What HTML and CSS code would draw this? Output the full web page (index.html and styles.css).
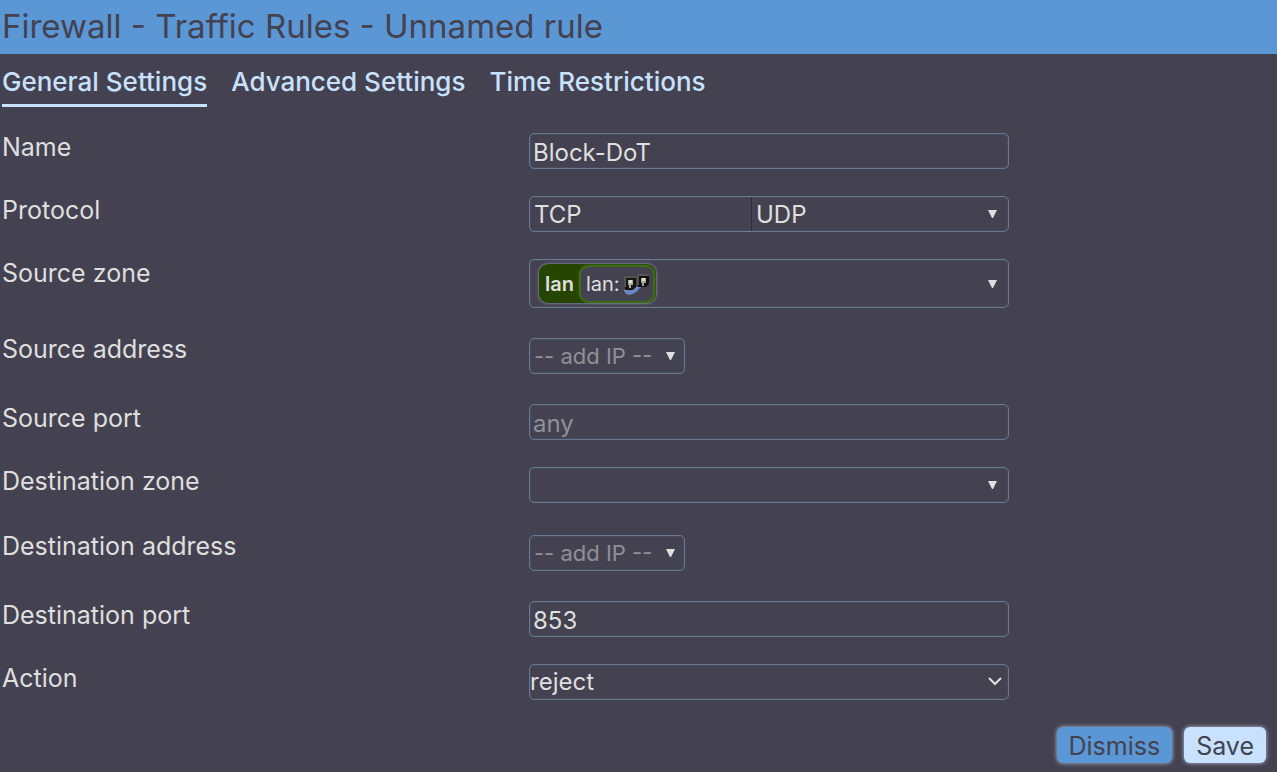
FILE: index.html
```html
<!DOCTYPE html>
<html lang="en">
<head>
<meta charset="utf-8">
<title>Firewall - Traffic Rules</title>
<link rel="stylesheet" href="styles.css">
</head>
<body>
<header class="title-bar"><h1 class="title">Firewall - Traffic Rules - Unnamed rule</h1></header>
<nav class="tabs">
  <a class="tab tab-active" href="#general">General Settings</a>
  <a class="tab" href="#advanced">Advanced Settings</a>
  <a class="tab" href="#time">Time Restrictions</a>
</nav>
<form class="form">
  <div class="row">
    <label class="label" for="name">Name</label>
    <div class="field"><input class="control" id="name" type="text" value="Block-DoT"></div>
  </div>
  <div class="row">
    <label class="label" for="protocol">Protocol</label>
    <div class="field"><button class="control dropdown" id="protocol" type="button">
      <span class="choice">TCP</span><span class="choice choice-next">UDP</span>
      <svg class="arrow" viewBox="0 0 9 8"><path d="M0 0h9L5 8H4z"/></svg>
    </button></div>
  </div>
  <div class="row">
    <label class="label" for="source-zone">Source zone</label>
    <div class="field"><button class="control dropdown zone" id="source-zone" type="button">
      <span class="zone-badge"><strong class="zone-name">lan</strong><span class="network">lan:
        <svg class="network-icon" viewBox="0 0 26 24">
          <path d="M2 17C4 24 11 21 15 16S21 12 23 12" fill="none" stroke="#6688ca" stroke-width="3"/>
          <path d="M3 17C6 21 10 19 14 15" fill="none" stroke="#8eabdd"/>
          <path d="M1 4h12v11l-3 3H2z" fill="#171715"/>
          <path d="M1 4h12v2H3v9H1z" fill="#55554f"/>
          <path d="M5 8h5v5H8v3H6v-3H5z" fill="#aaa99d"/>
          <path d="M6 8h3v3H6z" fill="#dddccf"/>
          <path d="M14 2h12v10l-3 3h-8z" fill="#10110f"/>
          <path d="M14 2h12v2H16v9h-2z" fill="#56564f"/>
          <path d="M18 6h5v5h-2v3h-2v-3h-1z" fill="#a5a498"/>
          <path d="M19 6h3v3h-3z" fill="#dddccf"/>
        </svg></span></span>
      <svg class="arrow" viewBox="0 0 9 8"><path d="M0 0h9L5 8H4z"/></svg>
    </button></div>
  </div>
  <div class="row">
    <label class="label" for="source-address">Source address</label>
    <div class="field field-add"><button class="control dropdown add" id="source-address" type="button">
      <span class="hint">-- add IP --</span>
      <svg class="arrow" viewBox="0 0 9 8"><path d="M0 0h9L5 8H4z"/></svg>
    </button></div>
  </div>
  <div class="row">
    <label class="label" for="source-port">Source port</label>
    <div class="field"><input class="control" id="source-port" type="text" placeholder="any"></div>
  </div>
  <div class="row">
    <label class="label" for="destination-zone">Destination zone</label>
    <div class="field field-zone"><button class="control dropdown" id="destination-zone" type="button">
      <svg class="arrow" viewBox="0 0 9 8"><path d="M0 0h9L5 8H4z"/></svg>
    </button></div>
  </div>
  <div class="row">
    <label class="label" for="destination-address">Destination address</label>
    <div class="field field-add"><button class="control dropdown add" id="destination-address" type="button">
      <span class="hint">-- add IP --</span>
      <svg class="arrow" viewBox="0 0 9 8"><path d="M0 0h9L5 8H4z"/></svg>
    </button></div>
  </div>
  <div class="row">
    <label class="label" for="destination-port">Destination port</label>
    <div class="field"><input class="control" id="destination-port" type="text" value="853"></div>
  </div>
  <div class="row">
    <label class="label" for="action">Action</label>
    <div class="field"><select class="control select" id="action"><option>reject</option></select>
      <svg class="chevron" viewBox="0 0 14 10"><path d="M1 2l6 6 6-6" fill="none" stroke="#dfdfdf" stroke-width="2"/></svg>
    </div>
  </div>
  <div class="actions">
    <button class="button" type="button">Dismiss</button>
    <button class="button button-save" type="submit">Save</button>
  </div>
</form>
</body>
</html>
```
FILE: styles.css
```css
* { box-sizing: border-box; }
body {
  margin: 0;
  background: #444251;
  color: #dfdfdf;
  font: 24px/28px Inter, sans-serif;
}
.title-bar { padding: 6px 2px 8px; background: #5b96d5; }
.title { margin: 0; color: #444251; font-size: 33px; line-height: 40px; font-weight: 400; }
.tabs { display: flex; flex-wrap: wrap; gap: 24px; padding: 14px 2px 26px; }
.tab {
  padding-bottom: 8px;
  border-bottom: 3px solid transparent;
  color: #c8e1ff;
  font-size: 26px;
  font-weight: 500;
  text-decoration: none;
}
.tab-active { border-color: #c8e1ff; }
.row { display: grid; grid-template-columns: 529fr 748fr; align-items: start; padding-bottom: 27px; }
.label { padding-left: 2px; font-size: 25px; }
.field { position: relative; display: flex; max-width: 480px; }
.field-add { padding: 3px 0; }
.field-zone { padding-bottom: 2px; }
.control {
  width: 100%;
  height: 36px;
  margin: 0;
  padding: 2px 3px 0;
  border: 1px solid #6b7891;
  border-radius: 5px;
  background: transparent;
  box-shadow: inset 0 0 2px #56627c;
  color: inherit;
  font: inherit;
}
.control::placeholder { color: #918f98; opacity: 1; }
.dropdown { display: flex; align-items: center; padding: 0 11px 0 0; text-align: left; }
.choice { flex: 0 0 221px; padding: 2px 0 0 4px; line-height: 32px; }
.choice-next { flex: 1; border-left: 1px solid #302f39; }
.arrow { width: 9px; height: 8px; margin-left: auto; fill: #dfdfdf; }
.zone { height: 49px; padding-left: 9px; }
.zone-badge {
  display: flex;
  align-items: center;
  gap: 6px;
  height: 39px;
  padding: 0 2px 0 6px;
  border-radius: 9px;
  background: #264500;
  box-shadow: 0 0 3px #9db1cf;
  font-size: 20px;
}
.zone-name { font-weight: 600; }
.network {
  display: flex;
  align-items: center;
  gap: 3px;
  height: 36px;
  padding: 0 4px 0 5px;
  border: 1px solid #3c6c14;
  border-radius: 9px;
  background: #444251;
  box-shadow: 0 0 3px #6eb340;
}
.network-icon { width: 26px; height: 24px; }
.add { width: 156px; padding: 0 9px 0 4px; }
.hint { color: #918f98; font-size: 22px; }
.select { padding: 0; appearance: none; }
.chevron { position: absolute; right: 7px; top: 12px; width: 14px; height: 10px; pointer-events: none; }
.actions { display: flex; justify-content: flex-end; gap: 12px; padding: 0 11px 9px 0; }
.button {
  height: 36px;
  padding: 2px 12px 0;
  border: 0;
  border-radius: 6px;
  background: #5b96d5;
  box-shadow: 0 0 4px #b4c3d9;
  color: #444251;
  font-size: 25px;
  font-family: inherit;
}
.button-save { background: #c8e1ff; }
```
